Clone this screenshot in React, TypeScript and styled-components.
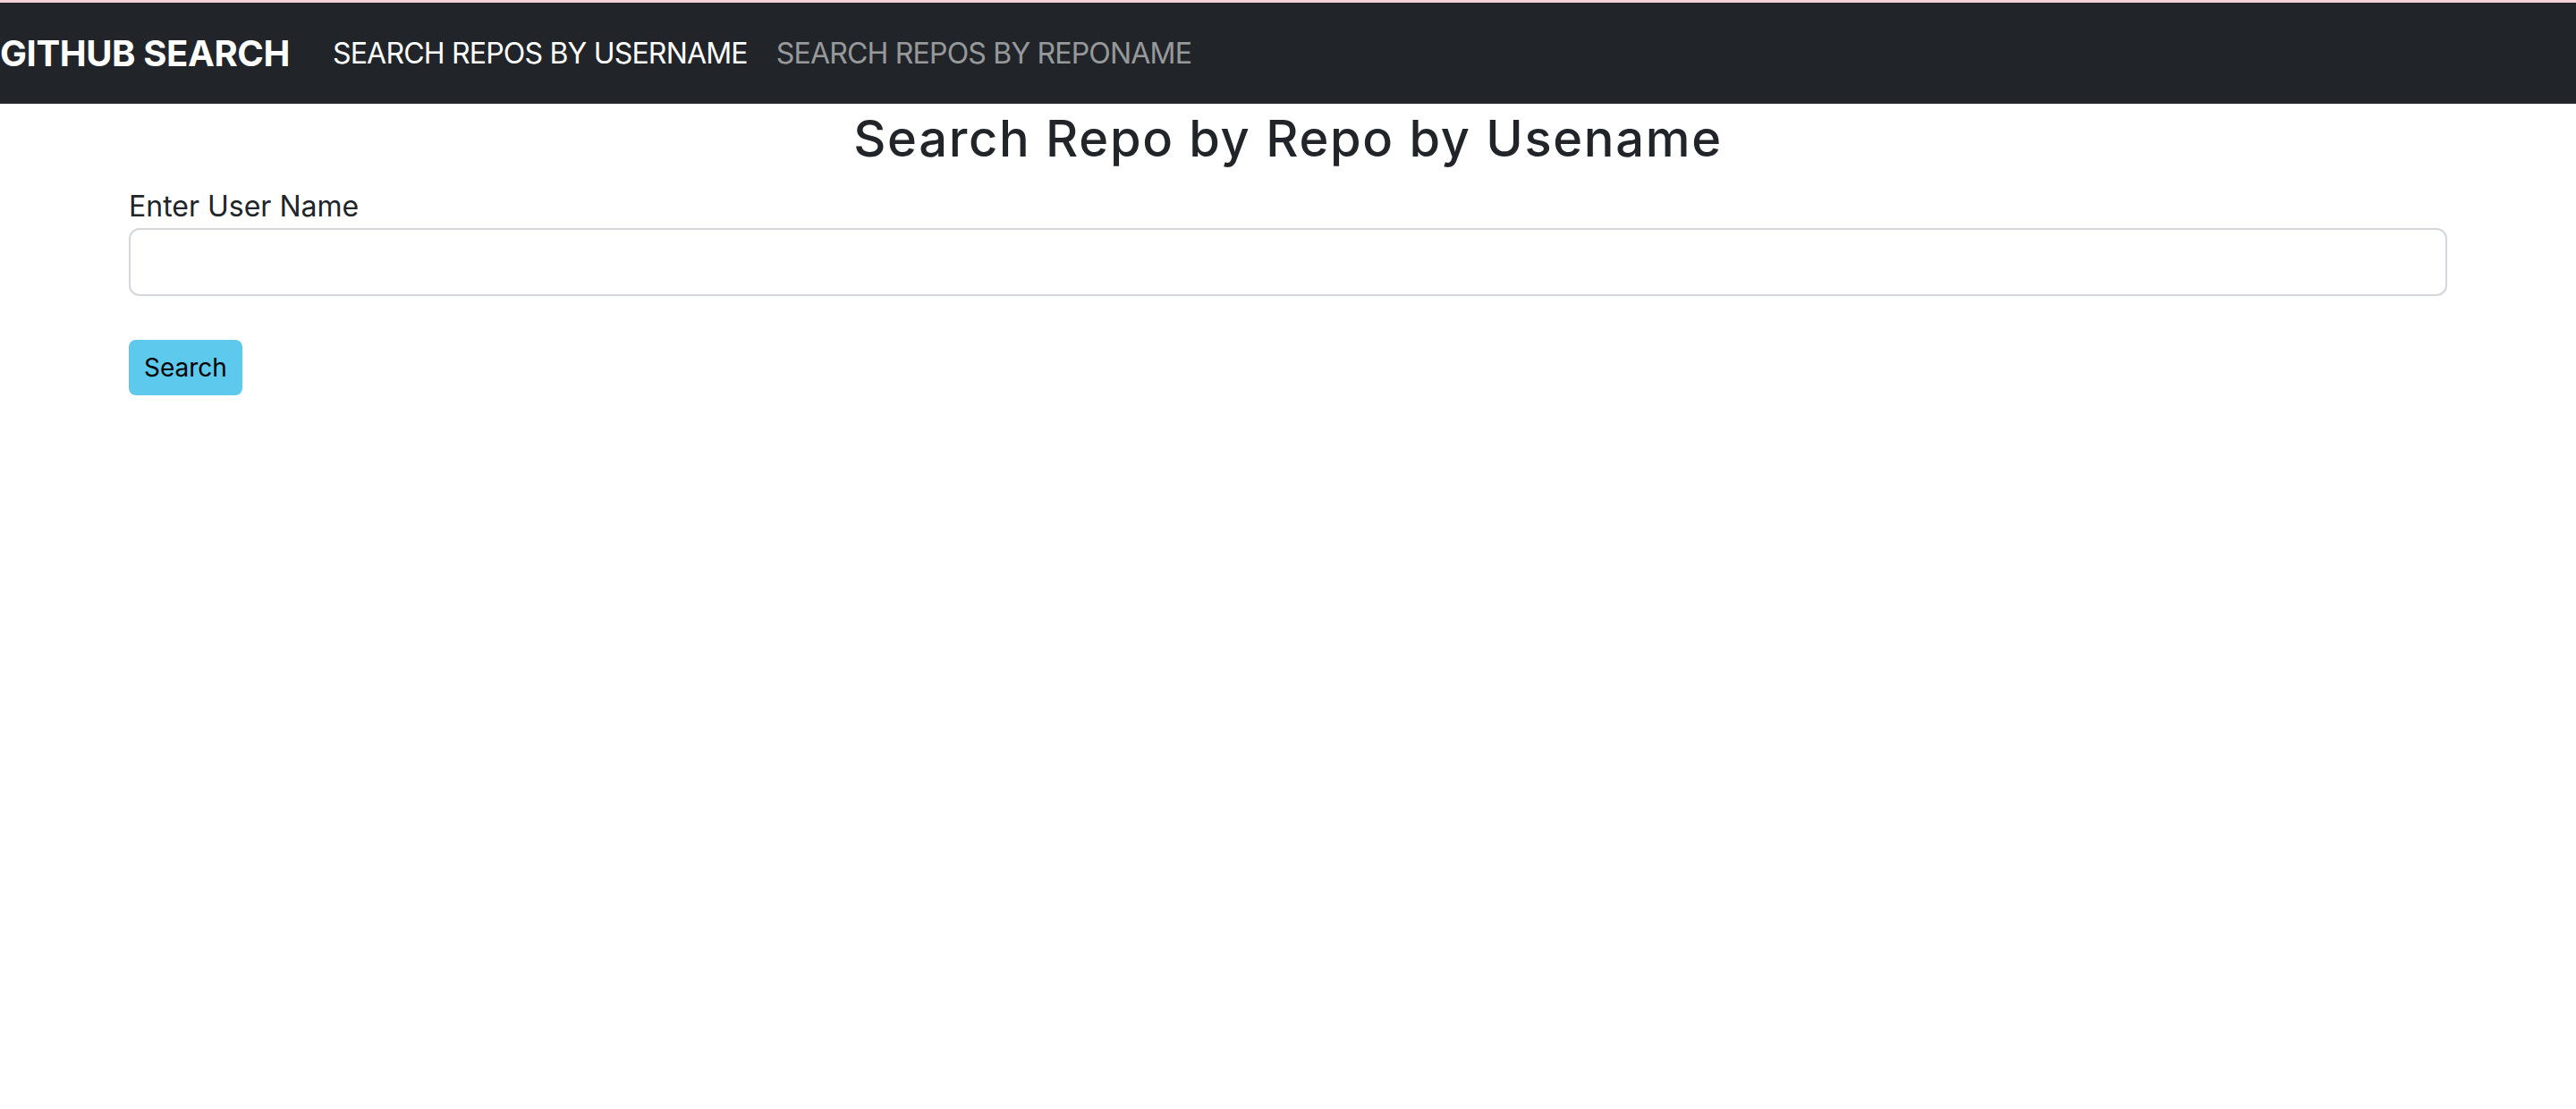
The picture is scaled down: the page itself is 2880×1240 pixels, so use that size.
import { createGlobalStyle, styled } from "styled-components";

const GlobalStyle = createGlobalStyle`
  html, body {
    margin: 0;
    padding: 0;
    background: #ffffff;
  }
  body {
    font-family: Inter, "Noto Sans", "Liberation Sans", sans-serif;
    color: #212529;
  }
  *, *::before, *::after {
    box-sizing: border-box;
  }
`;

const Page = styled.div`
  min-height: 1240px;
  border-top: 3px solid #f2d2d8;
`;

const Navbar = styled.nav`
  display: flex;
  align-items: center;
  padding: 17px 0 16px;
  background-color: #212529;
`;

const Brand = styled.a`
  padding: 10px 0;
  margin-right: 32px;
  color: #ffffff;
  font-size: 40px;
  font-weight: 700;
  line-height: 60px;
  letter-spacing: -0.4px;
  text-decoration: none;
  white-space: nowrap;
`;

const NavList = styled.ul`
  display: flex;
  margin: 0;
  padding: 0;
  list-style: none;
`;

const NavLink = styled.a<{ $active?: boolean }>`
  display: block;
  padding: 16px;
  font-size: 32px;
  line-height: 48px;
  letter-spacing: -0.8px;
  color: ${({ $active }) => ($active ? "#ffffff" : "rgba(255, 255, 255, 0.55)")};
  text-decoration: none;
  cursor: pointer;
`;

const Container = styled.main`
  max-width: 2640px;
  margin: 0 auto;
  padding: 0 24px;
`;

const Title = styled.h3`
  margin: 6px 0 18px;
  font-size: 56px;
  font-weight: 500;
  line-height: 1.2;
  letter-spacing: 1.7px;
  text-align: center;
`;

const Label = styled.label`
  display: block;
  font-size: 32px;
  line-height: 48px;
`;

const Input = styled.input`
  display: block;
  width: 100%;
  height: 76px;
  padding: 12px 24px;
  border: 2px solid #d3d7db;
  border-radius: 12px;
  font-family: inherit;
  font-size: 32px;
  color: #212529;
  outline: none;
`;

const Button = styled.button`
  display: inline-block;
  margin-top: 49px;
  height: 62px;
  padding: 0 17px;
  border: none;
  border-radius: 8px;
  background-color: #5dc9ec;
  color: #000000;
  font-family: inherit;
  font-size: 28px;
  line-height: 42px;
  cursor: pointer;
`;

const links = [
  { label: "SEARCH REPOS BY USERNAME", active: true },
  { label: "SEARCH REPOS BY REPONAME", active: false },
];

const App = () => (
  <Page>
    <GlobalStyle />
    <Navbar>
      <Brand>GITHUB SEARCH</Brand>
      <NavList>
        {links.map(({ label, active }) => (
          <li key={label}>
            <NavLink $active={active}>{label}</NavLink>
          </li>
        ))}
      </NavList>
    </Navbar>
    <Container>
      <Title>Search Repo by Repo by Usename</Title>
      <Label htmlFor="username">Enter User Name</Label>
      <Input id="username" type="text" />
      <Button type="button">Search</Button>
    </Container>
  </Page>
);

export default App;
